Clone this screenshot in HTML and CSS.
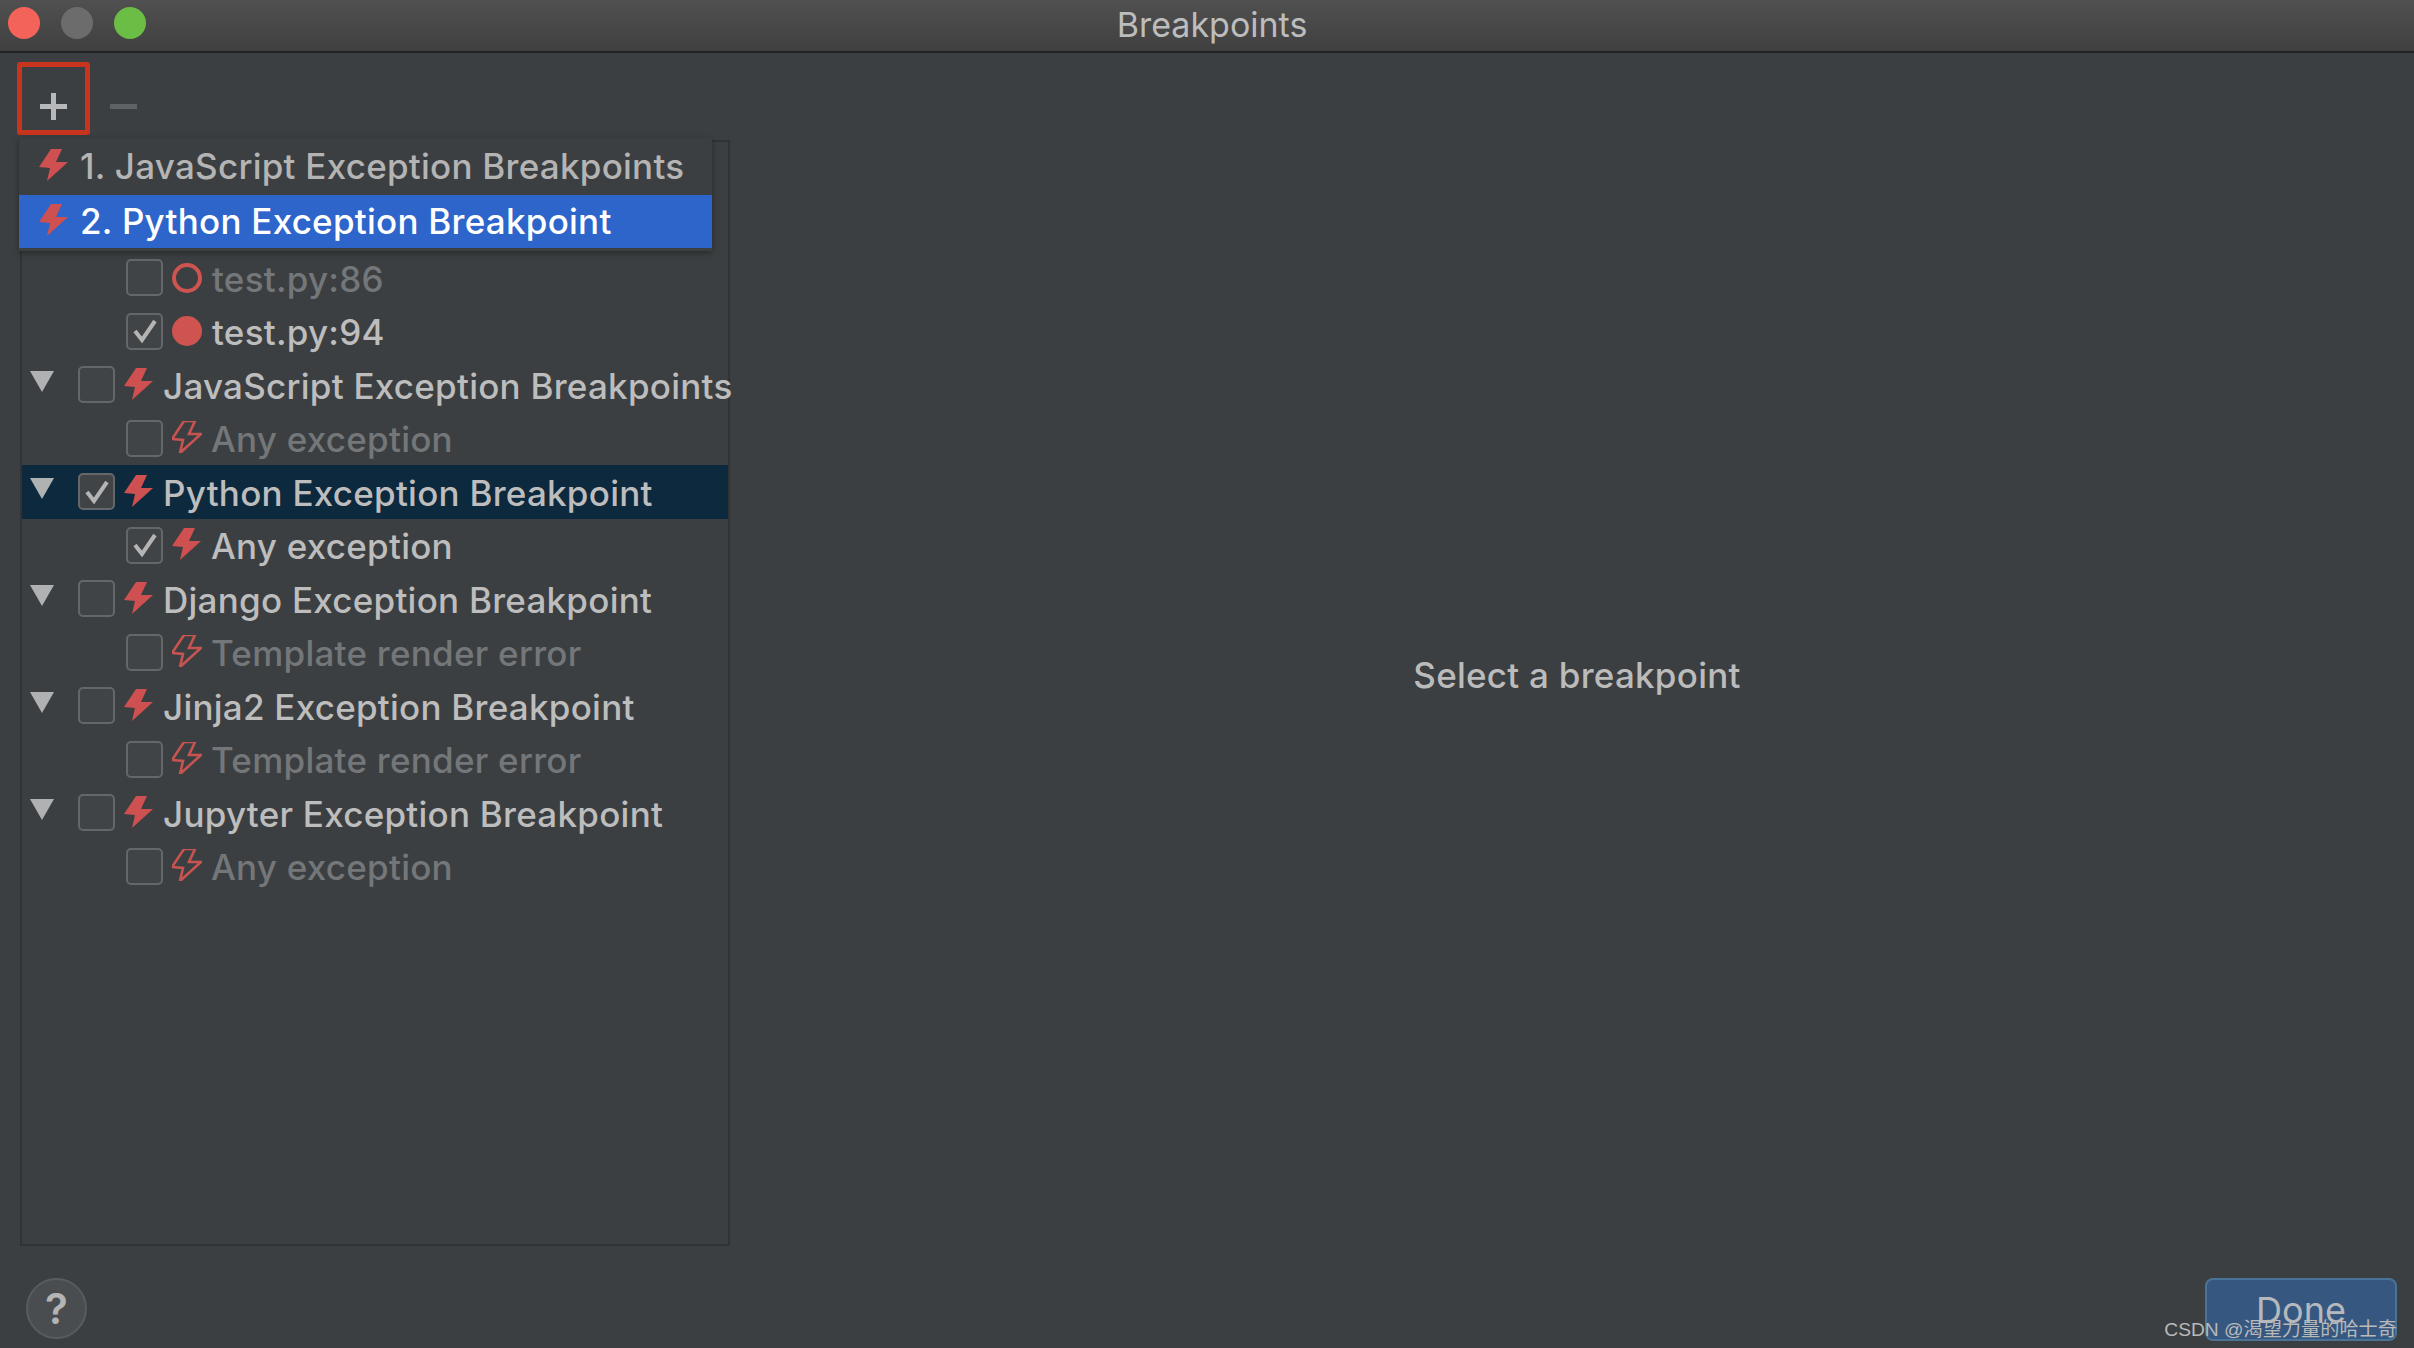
FILE: index.html
```html
<!DOCTYPE html>
<html lang="en">
<head>
<meta charset="utf-8">
<title>Breakpoints</title>
<link rel="stylesheet" href="styles.css">
</head>
<body>
<svg class="defs" width="0" height="0" aria-hidden="true">
  <symbol id="bolt" viewBox="0 0 30 32"><path d="M12 0 0 18l11 1-3 13 21-19-12 0 6-13z"/></symbol>
  <symbol id="check" viewBox="0 0 24 24"><path d="M2 12l7 9L22 2" fill="none" stroke="currentColor" stroke-width="4"/></symbol>
</svg>
<div class="window">
  <header class="titlebar">
    <div class="lights"><span class="light red"></span><span class="light grey"></span><span class="light green"></span></div>
    <div class="title">Breakpoints</div>
    <div></div>
  </header>
  <div class="body">
    <div class="toolbar">
      <div class="add-box"><svg class="glyph" viewBox="0 0 27 27"><path d="M11 0h5v11h11v5H16v11h-5V16H0v-5h11z"/></svg></div>
      <svg class="minus" viewBox="0 0 27 5"><rect width="27" height="5"/></svg>
    </div>
    <div class="content">
      <div class="left">
        <div class="tree">
          <div class="row leaf dim"><span class="box"></span><span class="dot ring"></span><span class="label">test.py:86</span></div>
          <div class="row leaf"><span class="box"><svg class="tick"><use href="#check"/></svg></span><span class="dot"></span><span class="label">test.py:94</span></div>
          <div class="row group"><span class="arrow"></span><span class="box"></span><svg class="bolt"><use href="#bolt"/></svg><span class="label">JavaScript Exception Breakpoints</span></div>
          <div class="row leaf dim"><span class="box"></span><svg class="bolt hollow"><use href="#bolt"/></svg><span class="label">Any exception</span></div>
          <div class="row group selected"><span class="arrow"></span><span class="box"><svg class="tick"><use href="#check"/></svg></span><svg class="bolt"><use href="#bolt"/></svg><span class="label">Python Exception Breakpoint</span></div>
          <div class="row leaf"><span class="box"><svg class="tick"><use href="#check"/></svg></span><svg class="bolt"><use href="#bolt"/></svg><span class="label">Any exception</span></div>
          <div class="row group"><span class="arrow"></span><span class="box"></span><svg class="bolt"><use href="#bolt"/></svg><span class="label">Django Exception Breakpoint</span></div>
          <div class="row leaf dim"><span class="box"></span><svg class="bolt hollow"><use href="#bolt"/></svg><span class="label">Template render error</span></div>
          <div class="row group"><span class="arrow"></span><span class="box"></span><svg class="bolt"><use href="#bolt"/></svg><span class="label">Jinja2 Exception Breakpoint</span></div>
          <div class="row leaf dim"><span class="box"></span><svg class="bolt hollow"><use href="#bolt"/></svg><span class="label">Template render error</span></div>
          <div class="row group"><span class="arrow"></span><span class="box"></span><svg class="bolt"><use href="#bolt"/></svg><span class="label">Jupyter Exception Breakpoint</span></div>
          <div class="row leaf dim"><span class="box"></span><svg class="bolt hollow"><use href="#bolt"/></svg><span class="label">Any exception</span></div>
        </div>
        <div class="menu">
          <div class="menu-item"><svg class="bolt"><use href="#bolt"/></svg><span>1. JavaScript Exception Breakpoints</span></div>
          <div class="menu-item active"><svg class="bolt"><use href="#bolt"/></svg><span>2. Python Exception Breakpoint</span></div>
        </div>
      </div>
      <div class="detail">Select a breakpoint</div>
    </div>
    <footer class="footer">
      <div class="help">?</div>
      <div class="done">Done</div>
    </footer>
  </div>
</div>
<div class="watermark">CSDN @渴望力量的哈士奇</div>
</body>
</html>
```
FILE: styles.css
```css
* { box-sizing: border-box; }
html, body { margin: 0; height: 100%; overflow: hidden; }
body {
  background: #3c3f41;
  font-family: Inter, "Noto Sans", "Noto Sans CJK SC", sans-serif;
  color: #bbbbbb;
  position: relative;
}
.defs { position: absolute; }
.window { display: flex; flex-direction: column; height: 1348px; }
.titlebar {
  height: 53px;
  display: grid;
  grid-template-columns: 1fr auto 1fr;
  align-items: center;
  background: linear-gradient(#505050, #404040);
  border-bottom: 2px solid #212224;
}
.lights { display: flex; gap: 21px; padding: 0 0 5px 8px; }
.light { width: 32px; height: 32px; border-radius: 50%; }
.red { background: #f4635a; }
.grey { background: #6c6c6c; }
.green { background: #6cbd45; }
.title { font-size: 34px; color: #bdbdbd; padding: 0 0 3px 10px; }
.body { flex: 1; display: flex; flex-direction: column; min-height: 0; }
.toolbar {
  height: 87px;
  padding: 9px 0 0 17px;
  display: flex;
  align-items: flex-start;
  gap: 20px;
}
.add-box {
  width: 73px; height: 73px;
  border: 5px solid #c9341f;
  border-radius: 3px;
  display: flex; align-items: center; justify-content: center;
  padding-top: 15px;
}
.glyph { width: 27px; height: 27px; fill: #b6b8ba; }
.minus { width: 27px; height: 5px; margin-top: 42px; fill: #5f6264; }
.content { flex: 1; display: flex; min-height: 0; position: relative; }
.left { width: 710px; margin-left: 20px; flex: none; position: relative; height: 1106px; }
.tree {
  height: 100%;
  border: 2px solid #303234;
  padding-top: 109px;
}
.row {
  height: 53.5px;
  display: flex;
  align-items: center;
  font-size: 35px;
  letter-spacing: .25px;
  font-weight: 450;
  white-space: nowrap;
  color: #bdbdbd;
}
.row .label { padding-top: 2px; }
.row.dim .label { color: #747779; }
.row.selected { background: #0d293e; }
.leaf { padding-left: 104px; }
.group { padding-left: 8px; }
.arrow {
  width: 0; height: 0;
  border-left: 12px solid transparent;
  border-right: 12px solid transparent;
  border-top: 21px solid #b0b1b3;
  margin-right: 24px;
  transform: translateY(-3px);
}
.box {
  width: 37px; height: 37px;
  flex: none;
  border: 2px solid #646769;
  border-radius: 5px;
  background: #404446;
  display: flex; align-items: center; justify-content: center;
  margin-right: 9px;
}
.tick { width: 24px; height: 24px; color: #b4b4b4; }
.bolt { width: 30px; height: 32px; fill: #cf5050; flex: none; margin-right: 9px; transform: translateY(-1px); }
.bolt.hollow { fill: none; stroke: #c75450; stroke-width: 2.6; overflow: visible; }
.dot { width: 30px; height: 30px; flex: none; border-radius: 50%; background: #cf5450; margin-right: 10px; }
.dot.ring { background: none; border: 4px solid #cf5450; }
.menu {
  position: absolute;
  left: -1px; top: -2px;
  width: 693px;
  background: #3c3f41;
  box-shadow: 0 2px 6px rgba(0,0,0,.35);
  padding-bottom: 3px;
}
.menu-item {
  height: 57px;
  display: flex;
  align-items: center;
  padding: 0 0 2px 20px;
  font-size: 35px;
  letter-spacing: .25px;
  font-weight: 450;
  color: #b4b4b4;
  white-space: nowrap;
}
.menu-item .bolt { margin-right: 11px; }
.menu-item.active { background: #2d65cb; color: #ffffff; height: 53px; }
.detail {
  flex: 1;
  display: flex; align-items: center; justify-content: center;
  font-size: 35px;
  letter-spacing: .25px;
  font-weight: 450;
  color: #bbbbbb;
  height: 1105px;
  padding-left: 10px;
  margin-top: -11px;
  padding-bottom: 14px;
}
.footer {
  height: 102px;
  display: flex;
  align-items: flex-start;
  justify-content: space-between;
  padding: 32px 17px 0 26px;
}
.help {
  width: 61px; height: 61px;
  border-radius: 50%;
  border: 2px solid #595c5e;
  background: #4a4d4f;
  display: flex; align-items: center; justify-content: center;
  font-size: 42px; font-weight: 600;
  color: #b4b4b4;
}
.done {
  width: 192px; height: 63px;
  border: 2px solid #4a7398;
  border-radius: 8px;
  background: #365880;
  color: #b5b9be;
  font-size: 36px;
  display: flex; align-items: center; justify-content: center;
}
.watermark {
  position: absolute;
  right: 17px; bottom: 7px;
  font-size: 19.2px;
  line-height: 22px;
  color: #b9b9b9;
  font-family: "Liberation Sans", "Noto Sans CJK SC", sans-serif;
  white-space: nowrap;
}
```
